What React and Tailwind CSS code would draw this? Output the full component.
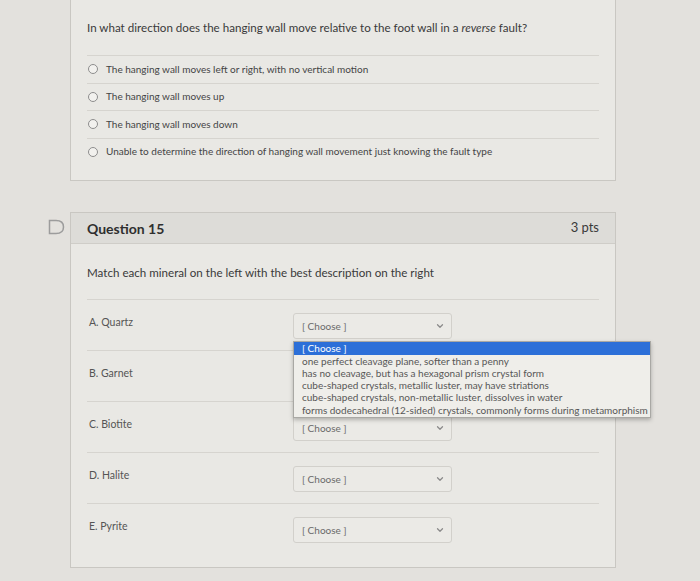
import { ChevronDown } from "lucide-react";

const answers = [
  "The hanging wall moves left or right, with no vertical motion",
  "The hanging wall moves up",
  "The hanging wall moves down",
  "Unable to determine the direction of hanging wall movement just knowing the fault type",
];

const minerals = ["A. Quartz", "B. Garnet", "C. Biotite", "D. Halite", "E. Pyrite"];

const choices = [
  "[ Choose ]",
  "one perfect cleavage plane, softer than a penny",
  "has no cleavage, but has a hexagonal prism crystal form",
  "cube-shaped crystals, metallic luster, may have striations",
  "cube-shaped crystals, non-metallic luster, dissolves in water",
  "forms dodecahedral (12-sided) crystals, commonly forms during metamorphism",
];

function Select({ open, covered }) {
  return (
    <div className="relative">
      <div className="flex h-[26px] w-[159px] items-center justify-between rounded-[3px] border border-[#d2d0cb] bg-[#ebeae6] pl-[8px] pr-[6px] text-[10px] text-[#6a6a6a]">
        {/* the open list hides this one's label */}
        <span>{covered ? "" : "[ Choose ]"}</span>
        <ChevronDown size={10} strokeWidth={3} className="text-[#8a8a8a]" />
      </div>
      {open && (
        <div className="absolute left-0 top-[28px] z-10 w-[358px] border border-[#a9a8a4] bg-[#efeeea] pb-[1px] shadow-[0_2px_4px_rgba(0,0,0,0.25)]">
          {choices.map((c, i) => (
            <div
              key={c}
              className={
                i === 0
                  ? "h-[12.5px] overflow-hidden bg-[#2c6fd8] pl-[8px] text-[10px] leading-[12.5px] text-white"
                  : "h-[12.3px] overflow-hidden whitespace-nowrap pl-[8px] text-[10px] leading-[12.3px] text-[#575757]"
              }
            >
              {c}
            </div>
          ))}
        </div>
      )}
    </div>
  );
}

export default function App() {
  return (
    <div
      className="min-h-[581px] overflow-hidden bg-[#e3e1dd] pl-[70px] text-[#3c3c3c]"
      style={{ fontFamily: "Lato, 'Open Sans', sans-serif" }}
    >
      <div className="w-[546px] border-x border-b border-[#c9c7c2] bg-[#e9e8e4] px-[16px] pb-[15px] pt-[20px]">
        <p className="h-[35px] text-[11.6px] leading-[16px] text-[#3a3a3a]">
          In what direction does the hanging wall move relative to the foot wall in a <i>reverse</i> fault?
        </p>
        {answers.map((a) => (
          <div key={a} className="flex h-[27.5px] items-center gap-[8px] border-t border-[#d6d4cf] pl-[1px]">
            <span className="h-[10px] w-[10px] rounded-full border border-[#8d8d8d] bg-[#f2f1ee]" />
            <span className="text-[10px] text-[#444]">{a}</span>
          </div>
        ))}
      </div>

      <div className="relative mt-[31px] w-[546px] border border-[#c9c7c2] bg-[#e9e8e4]">
        <svg
          className="absolute left-[-23px] top-[6px]"
          width="17"
          height="16"
          viewBox="0 0 17 16"
          fill="none"
          stroke="#9c9c9c"
          strokeWidth="1.5"
        >
          <path d="M1.5 1.5 H8 Q15.5 1.5 15.5 8 Q15.5 14.5 8 14.5 H1.5 Z" />
        </svg>
        <div className="flex h-[31px] items-center justify-between border-b border-[#cfcdc8] bg-[#dddcd8] px-[16px]">
          <span className="text-[14px] font-bold text-[#2f2f2f]">Question 15</span>
          <span className="text-[13px] text-[#3a3a3a]">3 pts</span>
        </div>
        <div className="px-[16px] pb-[13px]">
          <p className="flex h-[55px] items-center pt-[2px] text-[11.6px] text-[#3a3a3a]">
            Match each mineral on the left with the best description on the right
          </p>
          {minerals.map((m, i) => (
            <div key={m} className="flex h-[51px] border-t border-[#d6d4cf] pt-[13px]">
              <span className="w-[206px] pl-[2px] pt-[2px] text-[10.5px] text-[#555]">{m}</span>
              <Select open={i === 0} covered={i === 1} />
            </div>
          ))}
        </div>
      </div>
    </div>
  );
}
